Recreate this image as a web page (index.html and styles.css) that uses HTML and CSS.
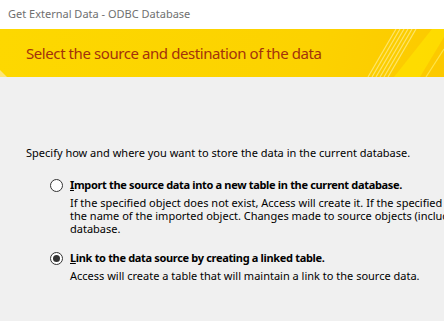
FILE: index.html
```html
<!DOCTYPE html>
<html lang="en">
<head>
  <meta charset="UTF-8">
  <title>Get External Data - ODBC Database</title>
  <link rel="stylesheet" href="styles.css">
</head>
<body>
  <div class="titlebar">Get External Data - ODBC Database</div>

  <div class="banner">
    <h1>Select the source and destination of the data</h1>
    <svg class="stripes" width="130" height="48" viewBox="0 0 130 48">
      <polygon points="80,48 106,48 130,8 130,0 118,0" fill="#ffe200" opacity="0.7"/>
      <g stroke="#fde56a" stroke-width="1.2">
        <line x1="54" y1="48" x2="82" y2="0"/>
        <line x1="58" y1="48" x2="86" y2="0"/>
        <line x1="62" y1="48" x2="90" y2="0"/>
        <line x1="66" y1="48" x2="94" y2="0"/>
        <line x1="70" y1="48" x2="98" y2="0"/>
        <line x1="74" y1="48" x2="102" y2="0"/>
      </g>
      <line x1="112" y1="48" x2="130" y2="20" stroke="#fee44a" stroke-width="1.2"/>
    </svg>
    <span class="corner"></span>
  </div>

  <div class="content">
    <p class="intro">Specify how and where you want to store the data in the current database.</p>

    <div class="option">
      <span class="radio"></span>
      <div class="option-text">
        <div class="label"><u>I</u>mport the source data into a new table in the current database.</div>
        <div class="desc">
          <div>If the specified object does not exist, Access will create it. If the specified object already exists, Access will append a number to</div>
          <div>the name of the imported object. Changes made to source objects (including data in tables) will not be reflected in the current</div>
          <div>database.</div>
        </div>
      </div>
    </div>

    <div class="option">
      <span class="radio checked"></span>
      <div class="option-text">
        <div class="label"><u>L</u>ink to the data source by creating a linked table.</div>
        <div class="desc">Access will create a table that will maintain a link to the source data.</div>
      </div>
    </div>
  </div>
</body>
</html>
```

FILE: styles.css
```css
body {
  margin: 0;
  width: 444px;
  height: 321px;
  overflow: hidden;
  background-color: #f0f0f0;
  font-family: "Noto Sans", Arial, sans-serif;
  font-size: 11px;
  color: #000;
}

.titlebar {
  background-color: #fff;
  height: 29px;
  line-height: 27px;
  padding-left: 8px;
  color: #6f6f6f;
}

.banner {
  position: relative;
  height: 48px;
  display: flex;
  align-items: center;
  padding-left: 26px;
  background: linear-gradient(100deg, #fdd800 0%, #fcd200 70%, #fcc900 100%);
  overflow: hidden;
}

.banner h1 {
  margin: 0;
  font-size: 15px;
  letter-spacing: -0.42px;
  font-weight: normal;
  color: #a3320c;
}

.banner .stripes {
  position: absolute;
  right: 0;
  top: 0;
}

.banner .corner {
  position: absolute;
  left: 0;
  bottom: 0;
  width: 0;
  height: 0;
  border-left: 7px solid #fde67a;
  border-top: 7px solid transparent;
}

.content {
  padding: 68px 26px 0;
}

.intro {
  margin: 0 0 17px;
  white-space: nowrap;
}

.option {
  display: flex;
  gap: 7px;
  margin-left: 24px;
  margin-bottom: 15px;
}

.radio {
  flex: none;
  width: 11px;
  height: 11px;
  margin-top: 2px;
  border: 1px solid #333;
  border-radius: 50%;
  background: #fff;
  display: flex;
  align-items: center;
  justify-content: center;
}

.radio.checked::after {
  content: "";
  width: 7px;
  height: 7px;
  border-radius: 50%;
  background: #333;
}

.option-text {
  white-space: nowrap;
}

.label {
  font-weight: bold;
  letter-spacing: -0.33px;
  line-height: 16px;
  margin-bottom: 3px;
}

.desc {
  line-height: 13px;
}
```
